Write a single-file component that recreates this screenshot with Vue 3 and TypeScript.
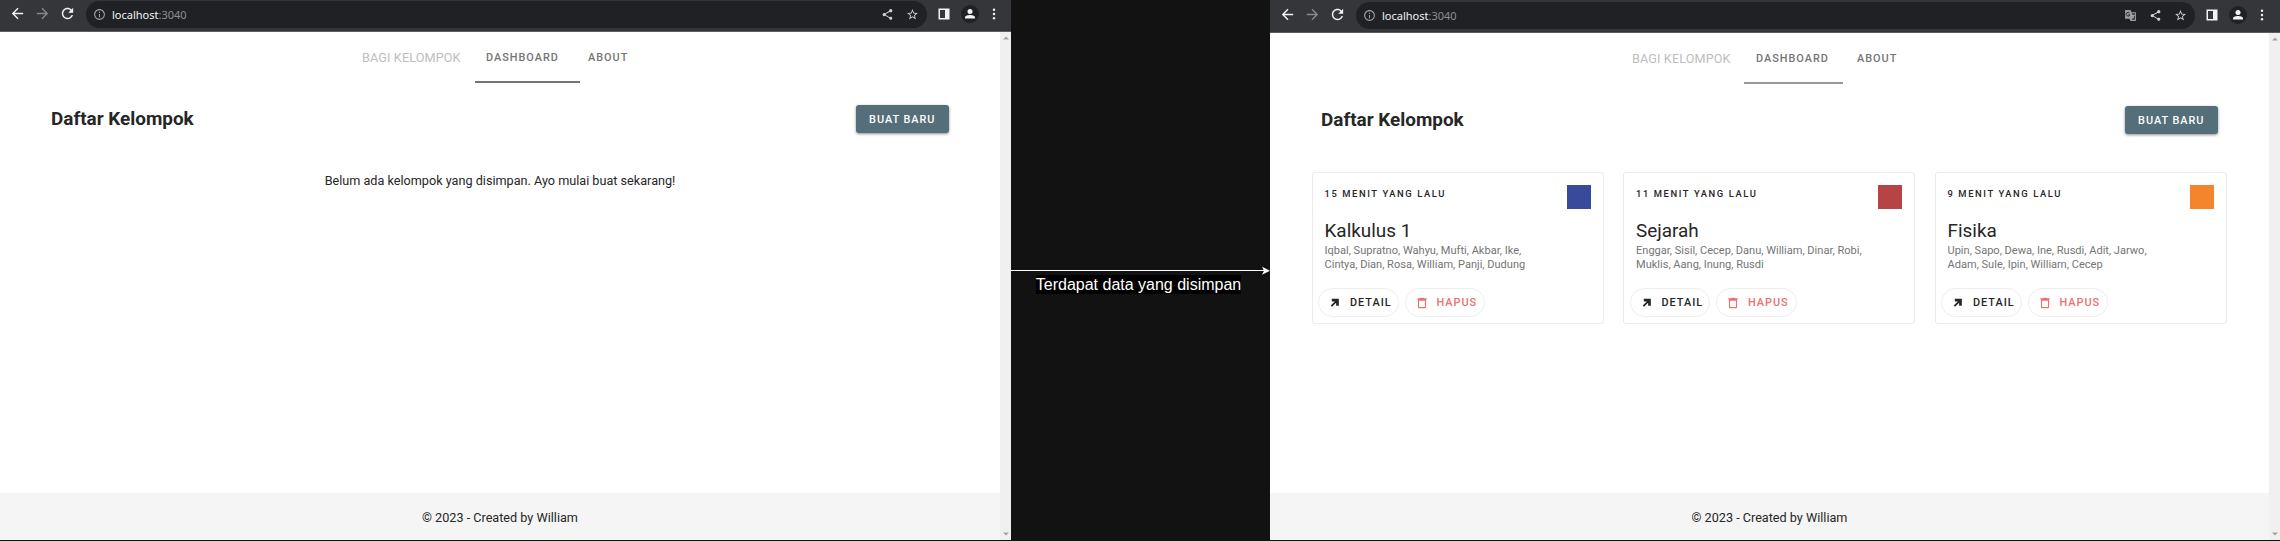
<script setup lang="ts">
interface Group {
  age: string
  title: string
  members: string[]
  color: string
}
interface Screen {
  id: string
  translate: boolean
  groups: Group[]
}

const screens: Screen[] = [
  { id: 'empty', translate: false, groups: [] },
  {
    id: 'filled',
    translate: true,
    groups: [
      { age: '15 menit yang lalu', title: 'Kalkulus 1', members: ['Iqbal, Supratno, Wahyu, Mufti, Akbar, Ike,', 'Cintya, Dian, Rosa, William, Panji, Dudung'], color: 'indigo' },
      { age: '11 menit yang lalu', title: 'Sejarah', members: ['Enggar, Sisil, Cecep, Danu, William, Dinar, Robi,', 'Muklis, Aang, Inung, Rusdi'], color: 'red' },
      { age: '9 menit yang lalu', title: 'Fisika', members: ['Upin, Sapo, Dewa, Ine, Rusdi, Adit, Jarwo,', 'Adam, Sule, Ipin, William, Cecep'], color: 'orange' },
    ],
  },
]
</script>

<template>
  <div class="board">
    <template v-for="s in screens" :key="s.id">
      <div v-if="s.id === 'filled'" class="flow">
        <svg class="arrow" width="259" height="12" viewBox="0 0 259 12">
          <path d="M0 5.500H254" stroke="#fff" stroke-width="1.200" />
          <path d="M259 5.700L251 1.700L253 5.700L251 9.700Z" fill="#fff" />
        </svg>
        <span class="flow-label">Terdapat data yang disimpan</span>
      </div>
      <section class="window" :class="s.id">
        <header class="toolbar">
          <svg class="i17 back" viewBox="0 0 24 24"><path d="M20 11H7.83l5.59-5.59L12 4l-8 8 8 8 1.41-1.41L7.83 13H20v-2z" /></svg>
          <svg class="i17 fwd" viewBox="0 0 24 24"><path d="M12 4l-1.41 1.41L16.17 11H4v2h12.17l-5.58 5.59L12 20l8-8z" /></svg>
          <svg class="i17 reload" viewBox="0 0 24 24"><path d="M17.65 6.35C16.2 4.9 14.21 4 12 4c-4.42 0-7.99 3.58-7.99 8s3.57 8 7.99 8c3.73 0 6.84-2.55 7.73-6h-2.08c-.82 2.33-3.04 4-5.65 4-3.31 0-6-2.69-6-6s2.69-6 6-6c1.66 0 3.14.69 4.22 1.78L13 11h7V4l-2.35 2.35z" /></svg>
          <div class="address">
            <svg class="i13 info" viewBox="0 0 24 24"><path d="M11 7h2v2h-2zm0 4h2v6h-2zm1-9C6.48 2 2 6.48 2 12s4.48 10 10 10 10-4.48 10-10S17.520 2 12 2zm0 18c-4.41 0-8-3.59-8-8s3.590-8 8-8 8 3.590 8 8-3.590 8-8 8z" /></svg>
            <span class="url">localhost<i>:3040</i></span>
            <svg v-if="s.translate" class="i13 translate" viewBox="0 0 24 24">
              <path d="M2 2h10l2 4h8v16H12l-2-4H2z" fill="#9a9da1" />
              <path d="M14.500 8H20v12h-6l2-3z" fill="#303236" />
              <path d="M10.500 7.500A3.500 3.500 0 1 0 11 11H7.500" fill="none" stroke="#202124" stroke-width="1.700" />
              <path d="M13 12h7M16.500 10v2M18.500 12q-1 4-4.500 5M15 13q1 2 3.500 4" fill="none" stroke="#b5b7ba" stroke-width="1.400" />
            </svg>
            <svg class="i13 share" viewBox="0 0 24 24"><path d="M18 16.080c-.76 0-1.440.3-1.960.770L8.910 12.700c.05-.23.09-.46.09-.7s-.04-.47-.09-.7l7.050-4.110c.54.5 1.250.81 2.040.81 1.660 0 3-1.340 3-3s-1.340-3-3-3-3 1.340-3 3c0 .24.04.47.09.7L8.040 9.810C7.500 9.310 6.790 9 6 9c-1.660 0-3 1.340-3 3s1.340 3 3 3c.79 0 1.500-.31 2.040-.81l7.120 4.160c-.05.21-.08.43-.08.65 0 1.610 1.310 2.920 2.920 2.920s2.920-1.310 2.920-2.920-1.310-2.920-2.920-2.920z" /></svg>
            <svg class="i13 star" viewBox="0 0 24 24"><path d="M22 9.240l-7.190-.62L12 2 9.190 8.630 2 9.240l5.460 4.730L5.820 21 12 17.270 18.180 21l-1.630-7.030L22 9.240zM12 15.400l-3.760 2.270 1-4.280-3.320-2.880 4.380-.38L12 6.100l1.710 4.040 4.380.38-3.320 2.880 1 4.280L12 15.400z" /></svg>
          </div>
          <svg class="panel" viewBox="0 0 12 12"><path d="M.5.5h11v11H.5zM2 2v8h5V2z" fill-rule="evenodd" /></svg>
          <svg class="avatar" viewBox="0 0 18 18"><circle cx="9" cy="9" r="9" fill="#202124" /><circle cx="9" cy="6.400" r="2.500" /><path d="M4 13.600V12.400C4 10.800 7 10 9 10s5 .8 5 2.400v1.200z" /></svg>
          <svg class="dots" viewBox="0 0 4 12"><circle cx="2" cy="1.700" r="1.200" /><circle cx="2" cy="6" r="1.200" /><circle cx="2" cy="10.300" r="1.200" /></svg>
        </header>
        <div class="viewport">
          <div class="page">
            <nav class="tabs">
              <a class="brand"><span>BAGI KELOMPOK</span></a>
              <a class="tab active"><span>DASHBOARD</span></a>
              <a class="tab about"><span>ABOUT</span></a>
            </nav>
            <div class="heading">
              <h1>Daftar Kelompok</h1>
              <button class="create">BUAT BARU</button>
            </div>
            <p v-if="!s.groups.length" class="empty-text">Belum ada kelompok yang disimpan. Ayo mulai buat sekarang!</p>
            <div v-else class="cards">
              <article v-for="g in s.groups" :key="g.title" class="card">
                <div class="card-top">
                  <span class="age">{{ g.age }}</span>
                  <span class="swatch" :class="g.color"></span>
                </div>
                <h2>{{ g.title }}</h2>
                <p class="members"><span v-for="m in g.members" :key="m">{{ m }}</span></p>
                <div class="actions">
                  <button class="chip">
                    <svg class="open" viewBox="0 0 24 24"><path d="M5 17.590L12.590 10H7V5H20V18H15V12.410L7.410 20z" /></svg><span>DETAIL</span>
                  </button>
                  <button class="chip danger">
                    <svg viewBox="0 0 24 24"><path d="M9 3V4H4V6H5V19A2 2 0 0 0 7 21H17A2 2 0 0 0 19 19V6H20V4H15V3H9M7 8H17V19H7V8Z" /></svg><span>HAPUS</span>
                  </button>
                </div>
              </article>
            </div>
            <footer>© 2023 - Created by William</footer>
          </div>
          <div class="scrollbar">
            <svg viewBox="0 0 6 4"><path d="M0 3.500L3 .5L6 3.500z" /></svg>
            <svg viewBox="0 0 6 4"><path d="M0 .5L3 3.500L6 .5z" /></svg>
          </div>
        </div>
      </section>
    </template>
  </div>
</template>

<style>
body { margin: 0; background: #121212; }
</style>

<style scoped>
* { box-sizing: border-box; }
.board {
  display: flex;
  width: 2280px;
  height: 541px;
  overflow: hidden;
  background: #121212;
  font-family: Roboto, "Liberation Sans", sans-serif;
  color: #262626;
}
h1, h2, p { margin: 0; }
button { font-family: inherit; padding: 0; border: 0; white-space: nowrap; }
svg { display: block; flex: none; }
.flow { width: 259px; display: flex; flex-direction: column; align-items: center; padding-top: 265px; }
.flow-label {
  margin-top: -2px;
  margin-right: 4px;
  height: 19px;
  background: #000;
  color: #fff;
  font: 16px/19px "Liberation Sans", Arial, sans-serif;
  white-space: nowrap;
}
.window { width: 1011px; height: 540px; display: flex; flex-direction: column; flex: none; }
.filled { width: 1010px; }
.toolbar {
  height: 32px;
  flex: none;
  display: flex;
  align-items: flex-start;
  padding: 1px 15px 0 9px;
  background: #35363a;
  border-bottom: 1px solid #5c5d60;
  fill: #f1f3f4;
}
.filled .toolbar { height: 33px; padding: 2px 16px 0 9px; }
.i17 { width: 17px; height: 17px; margin-top: 4px; }
.fwd { margin-left: 8px; fill: #86888b; }
.reload { margin-left: 8px; }
.address {
  flex: 1;
  height: 27px;
  margin: 0 11px 0 9.500px;
  border-radius: 14px;
  background: #202124;
  display: flex;
  align-items: center;
  padding: 0 8px 0 7.500px;
}
.i13 { width: 13px; height: 13px; fill: #d0d2d5; }
.info { fill: #9aa0a6; }
.url { margin-left: 6px; flex: 1; font: 11px/27px "Noto Sans", sans-serif; color: #f1f3f4; }
.url i { font-style: normal; color: #8c8f93; }
.share, .star { margin-left: 12px; }
.panel { width: 12px; height: 12px; margin-top: 7px; }
.avatar { width: 18px; height: 18px; margin: 4px 13.500px 0 10.500px; }
.dots { width: 4px; height: 12px; margin-top: 7px; }
.viewport { flex: 1; display: flex; background: #fff; min-height: 0; }
.page { flex: 1; display: flex; flex-direction: column; min-width: 0; }
.scrollbar {
  width: 11px;
  background: #f0f0f0;
  display: flex;
  flex-direction: column;
  align-items: center;
  justify-content: space-between;
  padding: 4px 0;
  fill: #a3a3a3;
}
.scrollbar svg { width: 6px; height: 4px; }
.tabs { display: flex; height: 51px; padding-left: 362px; }
.tabs a { display: flex; align-items: center; white-space: nowrap; }
.brand { width: 113px; color: #bdbdbd; font-size: 12.650px; letter-spacing: .12px; }
.tab { font-size: 10.900px; font-weight: 500; letter-spacing: .98px; color: #757575; }
.active { width: 105px; padding-left: 11px; border-bottom: 2px solid #757575; }
.active span { padding-top: 1px; }
.about { padding-left: 8px; }
.filled .active { width: 99px; margin-left: -1px; padding-left: 12px; border-color: #999; }
.filled .about { padding-left: 14px; }
.heading { display: flex; justify-content: space-between; padding: 22px 51px 0; height: 50px; }
h1 { font-size: 18.900px; line-height: 28px; font-weight: 700; }
.create {
  width: 93.500px;
  height: 28px;
  border-radius: 3px;
  background: #546e7a;
  color: #fff;
  font-size: 10.900px;
  font-weight: 500;
  letter-spacing: .98px;
  box-shadow: 0 1px 3px rgba(0, 0, 0, .45);
}
.empty-text { text-align: center; margin-top: 39px; font-size: 12.650px; line-height: 18px; }
.cards { display: flex; gap: 19.500px; padding: 38px 0 0 41.500px; }
.card { width: 292px; height: 152px; flex: none; border: 1px solid #ececec; border-radius: 3px; padding: 12px 12px 0; }
.card-top { display: flex; justify-content: space-between; height: 34px; }
.age { font-size: 9.400px; line-height: 18px; font-weight: 500; letter-spacing: 1.600px; text-transform: uppercase; }
.swatch { width: 24px; height: 24px; }
.indigo { background: #3a4a9b; }
.red { background: #b64444; }
.orange { background: #f4852d; }
h2 { font-size: 18.900px; line-height: 24px; font-weight: 400; }
.members { font-size: 11.050px; line-height: 13.500px; color: #757575; margin-top: 1px; }
.members span { display: block; white-space: nowrap; }
.actions { display: flex; gap: 6px; margin: 17px 0 0 -6.500px; }
.chip {
  width: 80.500px;
  height: 29px;
  border: 1px solid #ededed;
  border-radius: 15px;
  background: #fff;
  display: flex;
  align-items: center;
  padding-left: 9px;
  color: #262626;
  fill: currentColor;
  font-size: 10.900px;
  font-weight: 500;
  letter-spacing: .98px;
}
.chip svg { width: 14px; height: 14px; margin-right: 8px; }
.chip .open { width: 13px; height: 13px; margin-right: 9px; }
.danger { color: #e57373; }
footer { margin-top: auto; height: 47px; background: #f5f5f5; text-align: center; font-size: 12.650px; line-height: 50px; }
</style>
